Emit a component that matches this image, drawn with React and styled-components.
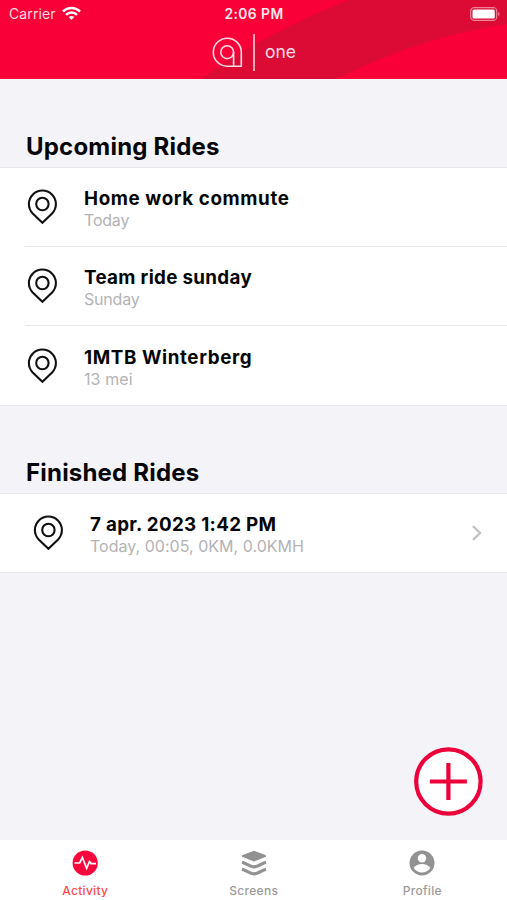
import styled, { createGlobalStyle } from "styled-components";

const GlobalStyle = createGlobalStyle`
  * {
    box-sizing: border-box;
  }

  body {
    margin: 0;
    font-family: Inter, "Liberation Sans", sans-serif;
  }

  p,
  h2 {
    margin: 0;
    white-space: nowrap;
  }
`;

const Screen = styled.div`
  position: relative;
  display: flex;
  flex-direction: column;
  width: 507px;
  height: 900px;
  overflow: hidden;
  background-color: #f3f3f8;
`;

const Header = styled.header`
  position: relative;
  height: 79px;
  background-color: #f90038;
  color: #fff;
`;

const Swoosh = styled.svg`
  position: absolute;
  inset: 0;
`;

const StatusBar = styled.div`
  position: relative;
  display: grid;
  grid-template-columns: 1fr auto 1fr;
  align-items: center;
  height: 27px;
  padding: 0 7px 0 9px;
`;

const Carrier = styled.div`
  display: flex;
  align-items: center;
  gap: 6px;
  font-size: 14px;
  letter-spacing: 0.1px;
  color: #ffd9e0;
`;

const Time = styled.p`
  padding-right: 1px;
  font-size: 13.8px;
  font-weight: 600;
  letter-spacing: 0.45px;
  color: #ffe8ed;
`;

const Battery = styled.svg`
  justify-self: end;
`;

const Brand = styled.div`
  position: relative;
  display: flex;
  align-items: center;
  height: 50px;
  padding-left: 212px;
`;

const BrandLine = styled.div`
  width: 2px;
  height: 37px;
  margin: 0 10px 0 10px;
  background-color: #ffa3b5;
`;

const BrandName = styled.p`
  padding-bottom: 2px;
  font-size: 17.5px;
  letter-spacing: 0;
  color: #ffdbe2;
`;

const Content = styled.main`
  flex: 1;
`;

const SectionTitle = styled.h2`
  height: ${(props) => props.$height}px;
  padding: ${(props) => props.$top}px 0 0 26px;
  font-size: 24px;
  line-height: 30px;
  font-weight: 700;
  letter-spacing: ${(props) => props.$spacing}px;
  color: #050507;
`;

const List = styled.div`
  border-top: 1px solid #e8e8eb;
  border-bottom: 1px solid #e8e8eb;
  background-color: #fff;
`;

const Row = styled.div`
  display: flex;
  align-items: center;
  height: ${(props) => props.$height || 79}px;
  margin-left: 25px;
  padding: 0 24px 0 ${(props) => props.$indent || 0}px;

  & + & {
    border-top: 1px solid #e8e8e9;
  }
`;

const RowText = styled.div`
  flex: 1;
  margin-left: 25px;
  padding-top: 5px;
`;

const RowTitle = styled.p`
  font-size: 18.8px;
  line-height: 22px;
  font-weight: 700;
  letter-spacing: ${(props) => props.$spacing}px;
  color: #060606;
`;

const RowInfo = styled.p`
  font-size: 16px;
  line-height: 21px;
  font-weight: 400;
  letter-spacing: ${(props) => props.$spacing}px;
  color: #b3b3b5;
`;

const AddButton = styled.button`
  position: absolute;
  right: 24px;
  bottom: 84px;
  width: 69px;
  height: 69px;
  padding: 0;
  border: none;
  background: none;
`;

const TabBar = styled.nav`
  display: grid;
  grid-template-columns: repeat(3, 168.5px);
  height: 60px;
  padding-left: 1px;
  background-color: #fff;
`;

const Tab = styled.div`
  display: flex;
  flex-direction: column;
  align-items: center;
  padding-top: 10px;
  color: ${(props) => (props.$active ? "#f8083c" : "#929292")};
`;

const TabLabel = styled.p`
  margin-top: 7px;
  font-size: 12px;
  line-height: 16px;
  font-weight: 500;
  letter-spacing: ${(props) => props.$spacing}px;
  color: ${(props) => (props.$active ? "#ff4a4d" : "#9b9b9b")};
`;

const upcoming = [
  { title: "Home work commute", info: "Today", height: 78, spacing: 0.6, infoSpacing: -0.2 },
  { title: "Team ride sunday", info: "Sunday", height: 79, spacing: 0.32, infoSpacing: -0.2 },
  { title: "1MTB Winterberg", info: "13 mei", height: 80, spacing: 0.6, infoSpacing: 0.1 },
];

function Wifi() {
  return (
    <svg width="19" height="15" viewBox="0 0 19 15" fill="none" stroke="#fff" strokeWidth="2.5">
      <path d="M1 5.5C5.8 .7 13.2 .7 18 5.5" />
      <path d="M4 8.8C7.1 5.7 11.9 5.7 15 8.8" />
      <path d="M9.5 14L6.7 11.1C8.3 9.6 10.7 9.6 12.3 11.1Z" fill="#fff" stroke="none" />
    </svg>
  );
}

function Logo() {
  return (
    <svg width="31" height="32" viewBox="0 0 31 32" fill="none" stroke="#ffdbe2" strokeWidth="1.6">
      <path d="M29.3 16.2V30.2H15.2A14 14 0 1 1 29.3 16.2Z" />
      <circle cx="15.2" cy="16.2" r="6.4" />
      <path d="M21.6 15.5V30" />
    </svg>
  );
}

function Pin() {
  return (
    <svg width="34" height="38" viewBox="0 0 34 38" fill="none" stroke="#111" strokeWidth="2.1">
      <path d="M17.4 34.8L7.7 25.4A13.5 13.5 0 1 1 27.1 25.4Z" />
      <circle cx="17.4" cy="16" r="6.2" />
    </svg>
  );
}

function ActivityIcon() {
  return (
    <svg width="26" height="26" viewBox="0 0 26 26" fill="none">
      <circle cx="13.2" cy="13" r="12.6" fill="currentColor" />
      <path d="M2.5 13H7.6L10.4 7.5L14.6 18.3L17.5 11.5L19 13.6H24" stroke="#fff" strokeWidth="1.7" />
    </svg>
  );
}

function ScreensIcon() {
  return (
    <svg width="26" height="26" viewBox="0 0 26 26" fill="none">
      <path d="M13 .8L25 5.2V6.8L13 11.5L1 6.8V5.2Z" fill="currentColor" />
      <path d="M1 12.2C5 13.2 9 16.8 13 16.8S21 13.2 25 12.2M1 19.2C5 20.2 9 23.8 13 23.8S21 20.2 25 19.2" stroke="currentColor" strokeWidth="3.2" />
    </svg>
  );
}

function ProfileIcon() {
  return (
    <svg width="26" height="26" viewBox="0 0 26 26">
      <circle cx="13" cy="13" r="12.5" fill="currentColor" />
      <circle cx="13" cy="8.3" r="4.2" fill="#fff" />
      <path d="M4.8 18C6.3 15.1 9.5 14 13 14S19.7 15.1 21.2 18C19.4 20.8 16.5 22.5 13 22.5S6.6 20.8 4.8 18Z" fill="#fff" />
    </svg>
  );
}

function App() {
  return (
    <>
      <GlobalStyle />
      <Screen>
        <Header>
          <Swoosh width="507" height="79">
            <path d="M201 79C245 47 292 23 349 0H507V24C445 33 388 53 337 79Z" fill="#dc0b35" />
          </Swoosh>
          <StatusBar>
            <Carrier>
              Carrier
              <Wifi />
            </Carrier>
            <Time>2:06 PM</Time>
            <Battery width="30" height="14" viewBox="0 0 30 14">
              <rect x=".7" y=".7" width="26" height="12.6" rx="3.6" fill="none" stroke="#f0839a" strokeWidth="1.2" />
              <rect x="2.5" y="2.5" width="22.3" height="9" rx="1.6" fill="#fff" />
              <path d="M28.2 5V9C30 8.2 30 5.8 28.2 5Z" fill="#f0839a" />
            </Battery>
          </StatusBar>
          <Brand>
            <Logo />
            <BrandLine />
            <BrandName>one</BrandName>
          </Brand>
        </Header>

        <Content>
          <SectionTitle $height={88} $top={53} $spacing={0.2}>
            Upcoming Rides
          </SectionTitle>
          <List>
            {upcoming.map((ride) => (
              <Row key={ride.title} $height={ride.height}>
                <Pin />
                <RowText>
                  <RowTitle $spacing={ride.spacing}>{ride.title}</RowTitle>
                  <RowInfo $spacing={ride.infoSpacing}>{ride.info}</RowInfo>
                </RowText>
              </Row>
            ))}
          </List>

          <SectionTitle $height={87} $top={52} $spacing={0.2}>
            Finished Rides
          </SectionTitle>
          <List>
            <Row $indent={6} $height={78}>
              <Pin />
              <RowText>
                <RowTitle $spacing={0.3}>7 apr. 2023 1:42 PM</RowTitle>
                <RowInfo $spacing={0.02}>Today, 00:05, 0KM, 0.0KMH</RowInfo>
              </RowText>
              <svg width="12" height="18" viewBox="0 0 12 18" fill="none" stroke="#c4c4c6" strokeWidth="2.4">
                <path d="M2 2.2L9 9L2 15.8" />
              </svg>
            </Row>
          </List>
        </Content>

        <AddButton>
          <svg width="69" height="69" viewBox="0 0 69 69" stroke="#ee003b" strokeWidth="4.2">
            <circle cx="34.4" cy="34.5" r="32.2" fill="#fff" />
            <path d="M34.4 16V53M15.9 34.5H52.9" />
          </svg>
        </AddButton>

        <TabBar>
          <Tab $active>
            <ActivityIcon />
            <TabLabel $active $spacing={0.3}>Activity</TabLabel>
          </Tab>
          <Tab>
            <ScreensIcon />
            <TabLabel $spacing={0.3}>Screens</TabLabel>
          </Tab>
          <Tab>
            <ProfileIcon />
            <TabLabel $spacing={0.3}>Profile</TabLabel>
          </Tab>
        </TabBar>
      </Screen>
    </>
  );
}

export default App;
